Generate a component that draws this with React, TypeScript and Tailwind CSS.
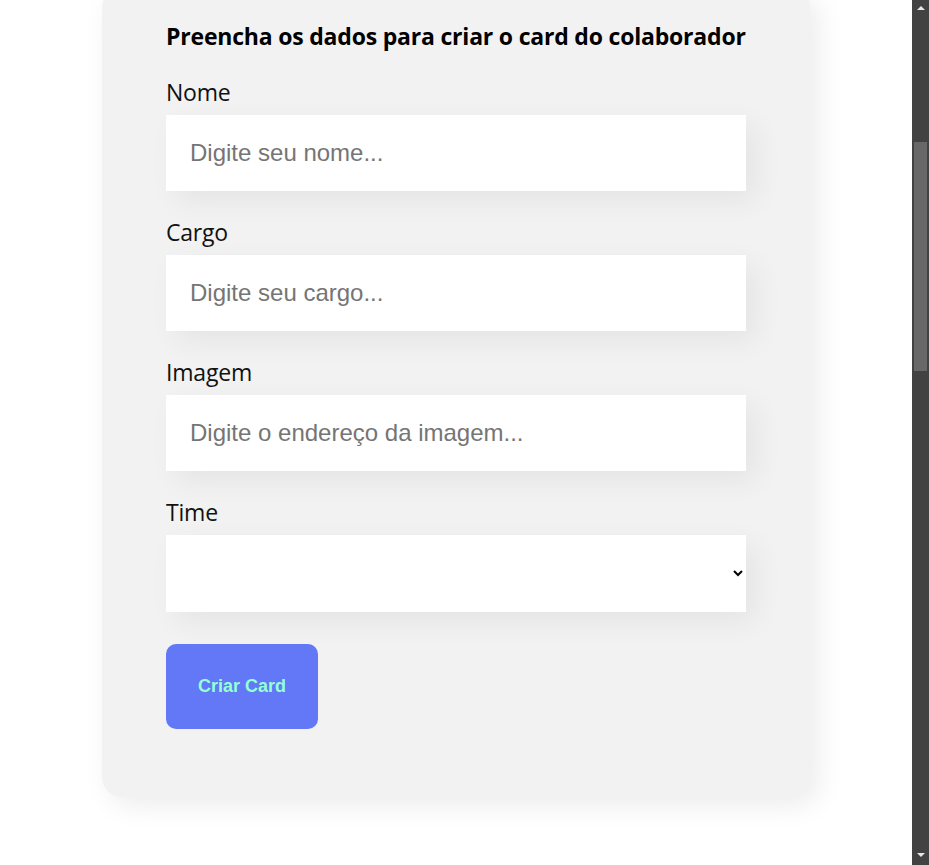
import { useState } from "react";

const fields = [
  { label: "Nome", placeholder: "Digite seu nome..." },
  { label: "Cargo", placeholder: "Digite seu cargo..." },
  { label: "Imagem", placeholder: "Digite o endereço da imagem..." },
];

export default function App() {
  const [values, setValues] = useState<Record<string, string>>({});
  const [time, setTime] = useState("");

  return (
    <div className="flex h-[865px] w-[929px] overflow-hidden bg-white">
      <main className="flex-1 overflow-hidden">
        <form
          onSubmit={(e) => e.preventDefault()}
          className="mx-auto -mt-[12px] w-[708px] rounded-[20px] bg-[#f2f2f2] px-16 pb-[68px] pt-8 shadow-[8px_8px_28px_rgba(0,0,0,0.08)]"
          style={{ fontFamily: '"Open Sans", "Noto Sans", sans-serif' }}
        >
          <h2 className="whitespace-nowrap text-[23px] font-bold leading-8 tracking-[-0.2px] text-black">
            Preencha os dados para criar o card do colaborador
          </h2>

          {fields.map((f, i) => (
            <div key={f.label} className={i === 0 ? "mt-6" : "mt-[25px]"}>
              <label className="block text-[23px] leading-8 tracking-[-0.2px] text-[#111]">{f.label}</label>
              <input
                value={values[f.label] ?? ""}
                onChange={(e) => setValues({ ...values, [f.label]: e.target.value })}
                placeholder={f.placeholder}
                className="mt-[7px] block h-[76px] w-full bg-white px-6 font-['Liberation_Sans',Arial,sans-serif] text-[24px] text-black outline-none placeholder:text-[#757575] shadow-[10px_10px_30px_rgba(0,0,0,0.06)]"
              />
            </div>
          ))}

          <div className="mt-[25px]">
            <label className="block text-[23px] leading-8 tracking-[-0.2px] text-[#111]">Time</label>
            <select
              value={time}
              onChange={(e) => setTime(e.target.value)}
              className="mt-[7px] block h-[77px] w-full bg-white px-6 font-['Liberation_Sans',Arial,sans-serif] text-[24px] outline-none shadow-[10px_10px_30px_rgba(0,0,0,0.06)]"
            >
              <option value=""></option>
              <option>Programação</option>
              <option>Front-End</option>
              <option>Data Science</option>
            </select>
          </div>

          <button
            type="submit"
            className="mt-8 h-[85px] w-[152px] rounded-[10px] bg-[#6278f7] font-['Liberation_Sans',Arial,sans-serif] text-[18px] font-bold text-[#95ffd4]"
          >
            Criar Card
          </button>
        </form>
      </main>

      {/* scrollbar */}
      <div className="flex w-[17px] flex-col items-center bg-[#424242]">
        <div className="mt-[6px] h-0 w-0 border-x-[4px] border-b-[4px] border-x-transparent border-b-[#e6e6e6]" />
        <div className="mt-[132px] h-[229px] w-[13px] bg-[#686868]" />
        <div className="mt-auto mb-[8px] h-0 w-0 border-x-[4px] border-t-[4px] border-x-transparent border-t-[#e6e6e6]" />
      </div>
    </div>
  );
}
